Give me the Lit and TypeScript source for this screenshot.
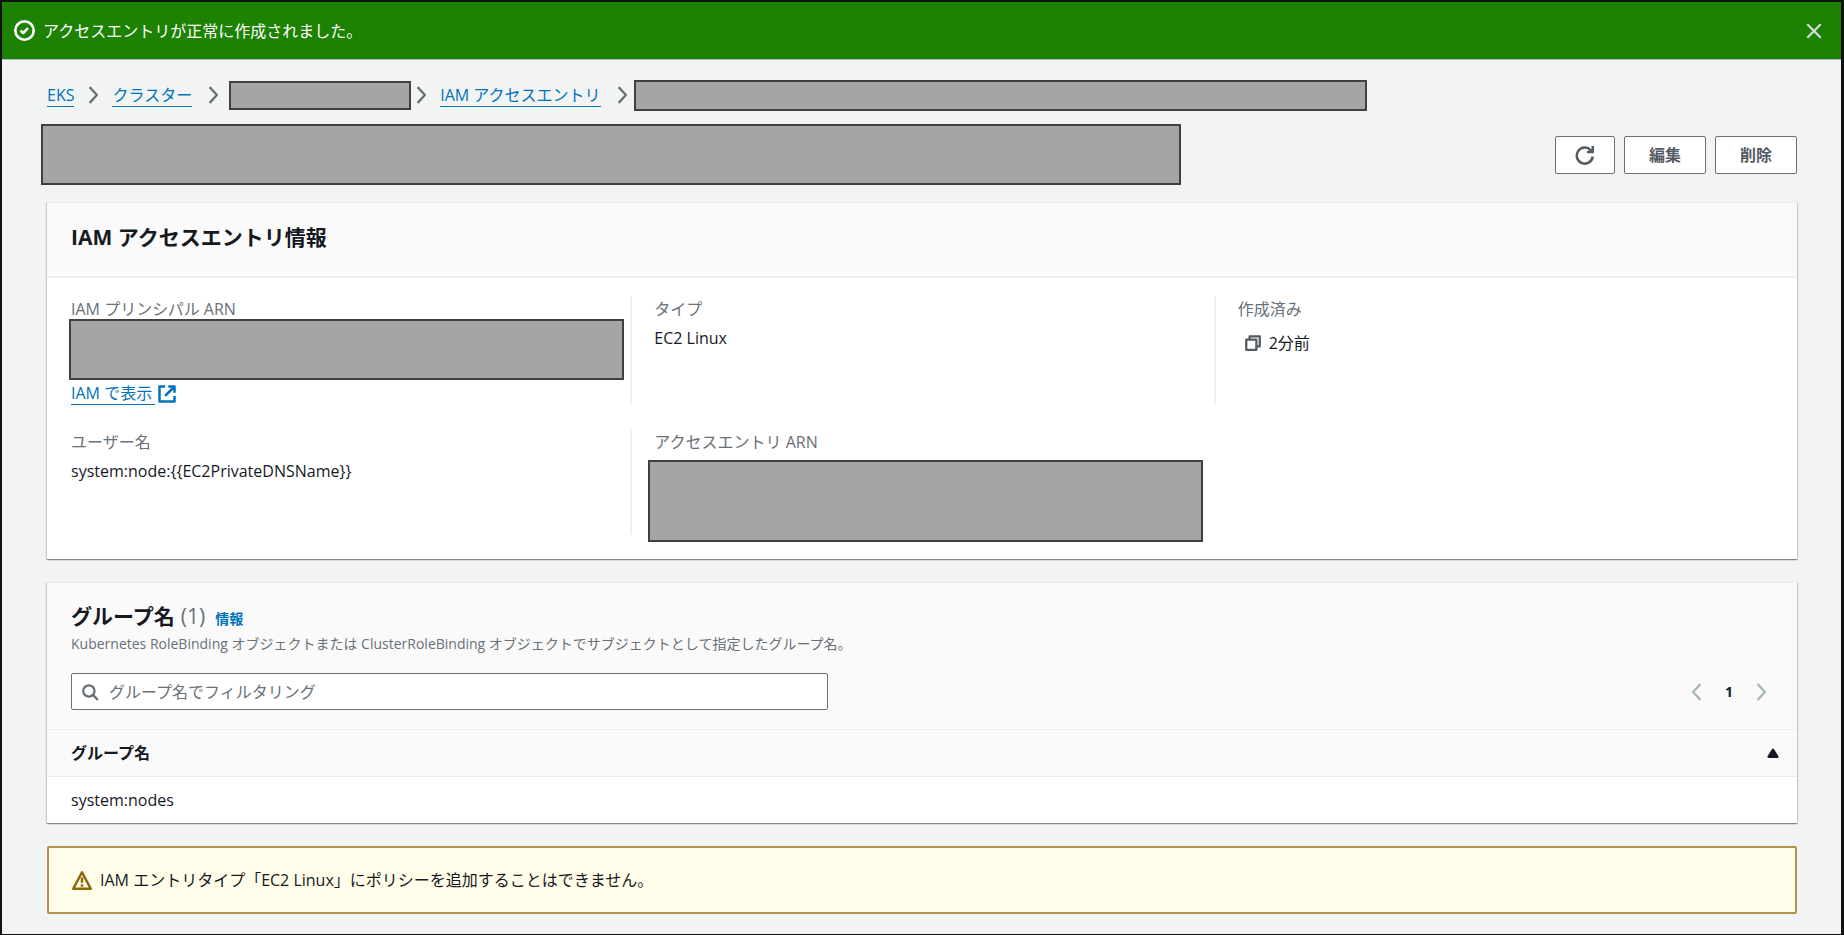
import { LitElement, html, css, svg } from "lit";
import { customElement, property } from "lit/decorators.js";

const shapes: Record<string, unknown> = {
  success: svg`<circle cx="8" cy="8" r="7"/><path d="M5 8l2 2 3.6-3.8"/>`,
  close: svg`<path d="M2 2l12 12M14 2L2 14"/>`,
  right: svg`<path d="M5 1l6.5 7L5 15"/>`,
  left: svg`<path d="M11 1L4.5 8l6.5 7"/>`,
  refresh: svg`<path d="M14.2 9.2A6.4 6.4 0 1 1 12.6 4.2L14 5.4M14.2 0.8V5.6H9.6"/>`,
  external: svg`<path d="M6.5 2H2v12h12V9.5M9 2h5v5M14 2L6.5 9.5"/>`,
  copy: svg`<path d="M2 5h9v9H2zM5 5V2h9v9h-3"/>`,
  search: svg`<circle cx="7" cy="7" r="5"/><path d="M11 11l4 4"/>`,
  warning: svg`<path d="M8 1.8L15 15H1zM8 6v4.2M8 11.4v2"/>`,
  sort: svg`<path d="M8 5l4 6.4H4z" fill="currentColor"/>`,
};

@customElement("ui-icon")
export class UiIcon extends LitElement {
  @property() name = "";
  @property({ type: Number }) size = 18;

  static styles = css`
    :host { display: inline-flex; flex: none; }
    .icon {
      display: block;
      fill: none;
      stroke: currentColor;
      stroke-width: 2;
      stroke-linejoin: round;
    }
  `;

  render() {
    return html`<svg class="icon" aria-hidden="true" viewBox="0 0 16 16" width=${this.size} height=${this.size}>
      ${shapes[this.name]}
    </svg>`;
  }
}

@customElement("app-root")
export class AppRoot extends LitElement {
  static styles = css`
    :host {
      display: block;
      box-sizing: border-box;
      min-height: 100vh;
      border: 2px solid #111;
      border-right-width: 3px;
      background: #f2f3f3;
      color: #16191f;
      font: 16px/24px "Open Sans", "Noto Sans CJK JP", sans-serif;
    }
    * { box-sizing: border-box; }
    button, input { font: inherit; }
    h2, p, dl, dd, ol { margin: 0; padding: 0; }
    a { color: #0073bb; }

    .flash {
      display: flex;
      align-items: center;
      gap: 8px;
      height: 58px;
      padding: 0 18px 0 12px;
      background: #1d8102;
      border-bottom: 1px solid #aab7b8;
      color: #fff;
    }
    .flash-text { flex: 1; }
    .plain {
      display: inline-flex;
      padding: 0;
      border: 0;
      background: none;
      color: inherit;
      cursor: pointer;
    }
    .flash .plain { color: #d5dbdb; }

    .page { padding: 19px 44px 20px 45px; }
    .masked {
      display: block;
      border: 2px solid #404040;
      background: #a5a5a5;
    }

    .crumbs {
      display: flex;
      align-items: center;
      height: 32px;
      list-style: none;
    }
    .crumb { display: flex; align-items: center; color: #687078; }
    .crumb ui-icon { margin: 0 10px; }
    .crumb .short { width: 182px; height: 29px; }
    .crumb .long { width: 733px; height: 31px; }
    .tight ui-icon { margin: 0 10px 0 1px; }
    .before-mask ui-icon { margin: 0 7px 0 12px; }
    .before-long ui-icon { margin: 0 3px 0 12px; }
    .link {
      text-decoration: none;
      border-bottom: 1px solid #0073bb;
      line-height: 22px;
    }

    .heading {
      display: flex;
      align-items: center;
      justify-content: space-between;
      margin: 13px 0 17px -6px;
    }
    .title { width: 1140px; height: 61px; }
    .actions { display: flex; gap: 9px; }
    .button {
      display: flex;
      align-items: center;
      justify-content: center;
      height: 38px;
      padding: 0 24px;
      border: 1px solid #687078;
      border-radius: 2px;
      background: #fff;
      color: #545b64;
      font-weight: 700;
      cursor: pointer;
    }
    .button.symbol { padding: 0 19px; }

    .card {
      background: #fff;
      border-top: 1px solid #eaeded;
      box-shadow: 0 1px 1px rgba(0, 28, 36, 0.3), 1px 1px 1px rgba(0, 28, 36, 0.15), -1px 1px 1px rgba(0, 28, 36, 0.15);
      margin-bottom: 23px;
    }
    .card-head { background: #fafafa; border-bottom: 2px solid #eff0f0; padding: 19px 24px 24px; }
    .card-title { font-size: 21px; line-height: 30px; font-weight: 700; }

    .facts {
      display: grid;
      grid-template-columns: repeat(3, 1fr);
      row-gap: 24px;
      padding: 18px 0 24px;
    }
    .fact { min-height: 106px; padding: 1px 24px 0 22px; border-left: 2px solid #eff0f0; }
    .first { border-left-color: transparent; }
    .label { color: #687078; }
    .value { padding-top: 5px; }
    .principal .masked { height: 61px; margin: -2px -18px 1px -2px; }
    .entry .label { margin-bottom: 6px; }
    .entry .masked { height: 82px; margin: 0 -13px -7px -6px; }
    .fact-link { display: inline-flex; align-items: center; gap: 2px; text-decoration: none; }
    .fact-link .link { padding-right: 3px; }
    .created { display: flex; align-items: center; gap: 7px; padding: 10px 0 0 6px; }
    .created .plain { color: #545b64; }

    .list-head { padding: 18px 24px 19px; border-bottom-width: 1px; }
    .list-title { display: flex; align-items: baseline; gap: 6px; }
    .count { font-weight: 400; color: #687078; }
    .info { font-size: 14px; font-weight: 700; text-decoration: none; margin-left: 4px; }
    .description { font-size: 14px; line-height: 20px; color: #687078; }
    .tools {
      display: flex;
      align-items: center;
      justify-content: space-between;
      margin-top: 19px;
    }
    .filter {
      display: flex;
      align-items: center;
      gap: 10px;
      width: 757px;
      height: 37px;
      padding: 0 9px;
      border: 1px solid #687078;
      border-radius: 2px;
      background: #fff;
      color: #687078;
    }
    .filter-input {
      flex: 1;
      min-width: 0;
      padding: 0;
      border: 0;
      outline: 0;
      background: none;
      color: #16191f;
    }
    .filter-input::placeholder { color: #687078; opacity: 1; }
    .pager { display: flex; align-items: center; gap: 18px; padding-right: 3px; color: #aab7b8; }
    .page-number { color: #16191f; font-size: 14px; font-weight: 700; width: 10px; justify-content: center; }

    .table { width: 100%; border-collapse: collapse; text-align: left; }
    .table th { height: 46px; padding: 0 15px 0 24px; background: #fafafa; border-bottom: 1px solid #eaeded; }
    .table td { height: 47px; padding: 0 24px; }
    .sort { display: flex; width: 100%; align-items: center; justify-content: space-between; font-weight: 700; }

    .warning {
      display: flex;
      align-items: center;
      gap: 8px;
      min-height: 68px;
      padding: 0 23px;
      border: 2px solid #b2934a;
      border-radius: 2px;
      background: #fffde9;
    }
    .warning ui-icon { color: #8d6605; }
  `;

  render() {
    return html`
      <div class="flash" role="status">
        <ui-icon name="success" size="21"></ui-icon>
        <span class="flash-text">アクセスエントリが正常に作成されました。</span>
        <button class="plain" aria-label="閉じる"><ui-icon name="close"></ui-icon></button>
      </div>
      <main class="page">
        <nav aria-label="パンくずリスト">
          <ol class="crumbs">
            <li class="crumb"><a class="link" href="#eks">EKS</a><ui-icon name="right"></ui-icon></li>
            <li class="crumb before-mask"><a class="link" href="#clusters">クラスター</a><ui-icon name="right"></ui-icon></li>
            <li class="crumb tight"><span class="masked short"></span><ui-icon name="right"></ui-icon></li>
            <li class="crumb before-long"><a class="link" href="#access">IAM アクセスエントリ</a><ui-icon name="right"></ui-icon></li>
            <li class="crumb"><span class="masked long"></span></li>
          </ol>
        </nav>
        <div class="heading">
          <span class="masked title"></span>
          <div class="actions">
            <button class="button symbol" aria-label="更新"><ui-icon name="refresh" size="20"></ui-icon></button>
            <button class="button">編集</button>
            <button class="button">削除</button>
          </div>
        </div>

        <section class="card">
          <div class="card-head"><h2 class="card-title">IAM アクセスエントリ情報</h2></div>
          <dl class="facts">
            <div class="fact first principal">
              <dt class="label">IAM プリンシパル ARN</dt>
              <dd>
                <span class="masked"></span>
                <a class="fact-link" href="#iam"><span class="link">IAM で表示</span><ui-icon name="external" size="20"></ui-icon></a>
              </dd>
            </div>
            <div class="fact">
              <dt class="label">タイプ</dt>
              <dd class="value">EC2 Linux</dd>
            </div>
            <div class="fact">
              <dt class="label">作成済み</dt>
              <dd class="created">
                <button class="plain" aria-label="コピー"><ui-icon name="copy"></ui-icon></button>2分前
              </dd>
            </div>
            <div class="fact first">
              <dt class="label">ユーザー名</dt>
              <dd class="value">system:node:{{EC2PrivateDNSName}}</dd>
            </div>
            <div class="fact entry">
              <dt class="label">アクセスエントリ ARN</dt>
              <dd><span class="masked"></span></dd>
            </div>
          </dl>
        </section>

        <section class="card">
          <div class="card-head list-head">
            <h2 class="card-title list-title">
              グループ名 <span class="count">(1)</span><a class="info" href="#info">情報</a>
            </h2>
            <p class="description">
              Kubernetes RoleBinding オブジェクトまたは ClusterRoleBinding オブジェクトでサブジェクトとして指定したグループ名。
            </p>
            <div class="tools">
              <label class="filter">
                <ui-icon name="search"></ui-icon>
                <input class="filter-input" type="text" aria-label="グループ名でフィルタリング" placeholder="グループ名でフィルタリング" />
              </label>
              <div class="pager">
                <button class="plain" aria-label="前のページ"><ui-icon name="left"></ui-icon></button>
                <button class="plain page-number">1</button>
                <button class="plain" aria-label="次のページ"><ui-icon name="right"></ui-icon></button>
              </div>
            </div>
          </div>
          <table class="table">
            <thead>
              <tr><th scope="col"><button class="plain sort">グループ名<ui-icon name="sort"></ui-icon></button></th></tr>
            </thead>
            <tbody>
              <tr><td>system:nodes</td></tr>
            </tbody>
          </table>
        </section>

        <div class="warning" role="note">
          <ui-icon name="warning" size="20"></ui-icon>
          <span>IAM エントリタイプ「EC2 Linux」にポリシーを追加することはできません。</span>
        </div>
      </main>
    `;
  }
}
